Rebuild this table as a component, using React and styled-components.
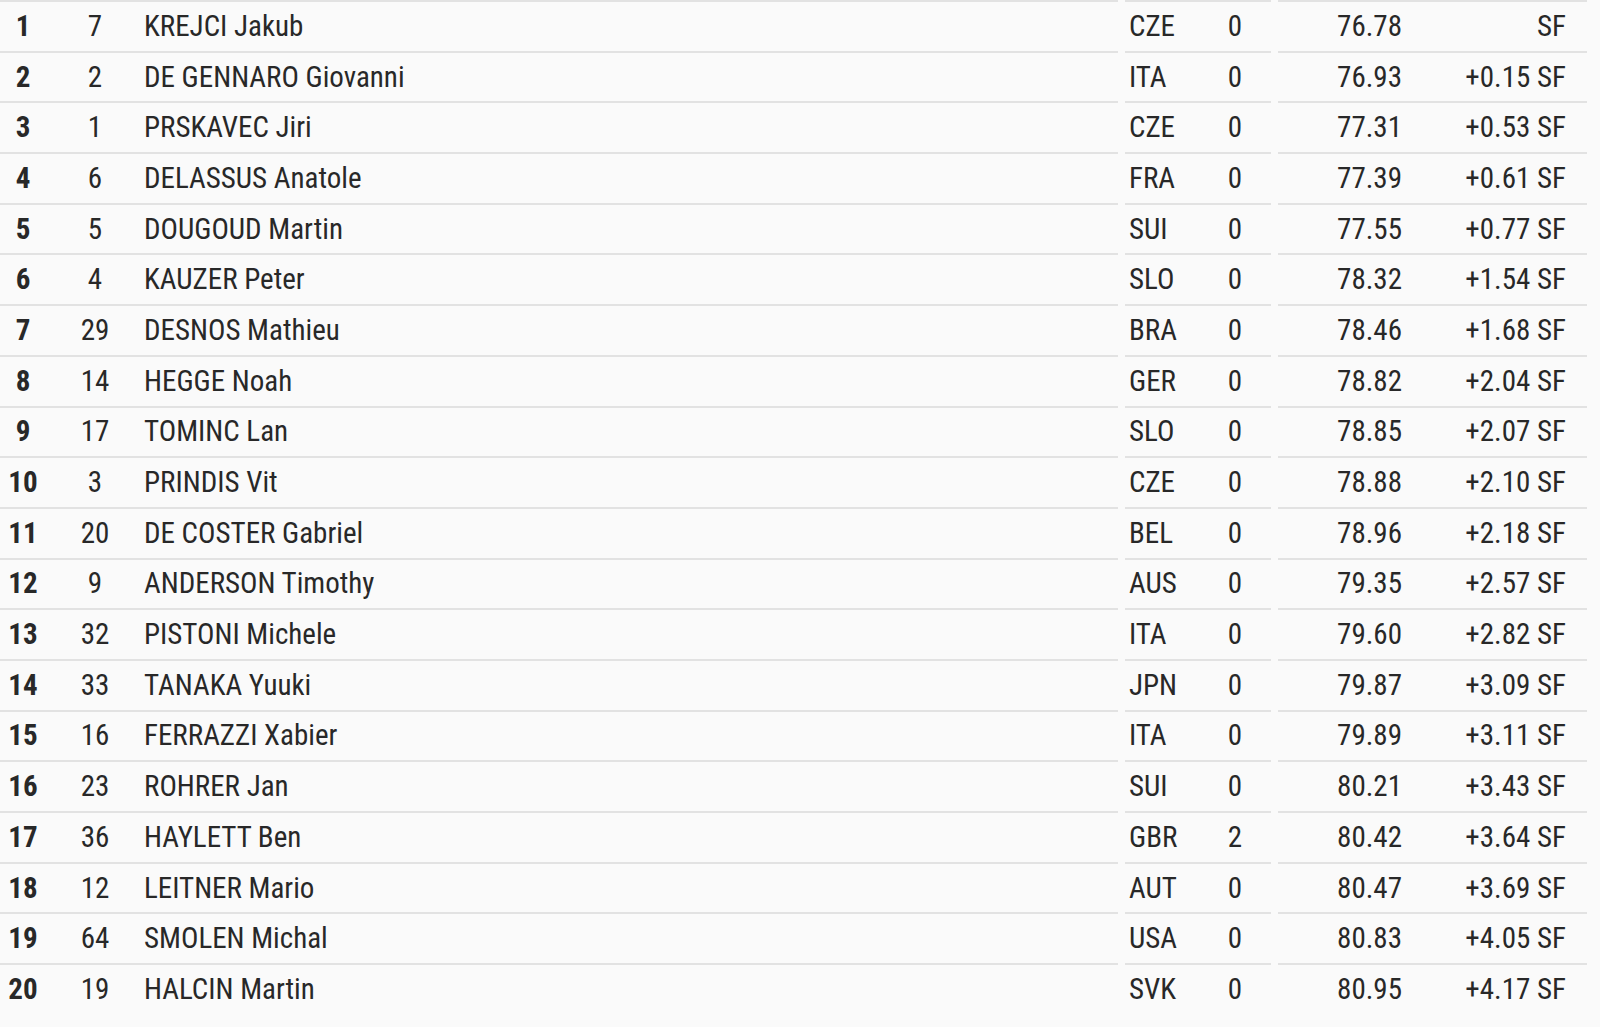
import styled, { createGlobalStyle } from 'styled-components';

const results = [
  [1, 7, 'KREJCI Jakub', 'CZE', 0, '76.78', 'SF'],
  [2, 2, 'DE GENNARO Giovanni', 'ITA', 0, '76.93', '+0.15 SF'],
  [3, 1, 'PRSKAVEC Jiri', 'CZE', 0, '77.31', '+0.53 SF'],
  [4, 6, 'DELASSUS Anatole', 'FRA', 0, '77.39', '+0.61 SF'],
  [5, 5, 'DOUGOUD Martin', 'SUI', 0, '77.55', '+0.77 SF'],
  [6, 4, 'KAUZER Peter', 'SLO', 0, '78.32', '+1.54 SF'],
  [7, 29, 'DESNOS Mathieu', 'BRA', 0, '78.46', '+1.68 SF'],
  [8, 14, 'HEGGE Noah', 'GER', 0, '78.82', '+2.04 SF'],
  [9, 17, 'TOMINC Lan', 'SLO', 0, '78.85', '+2.07 SF'],
  [10, 3, 'PRINDIS Vit', 'CZE', 0, '78.88', '+2.10 SF'],
  [11, 20, 'DE COSTER Gabriel', 'BEL', 0, '78.96', '+2.18 SF'],
  [12, 9, 'ANDERSON Timothy', 'AUS', 0, '79.35', '+2.57 SF'],
  [13, 32, 'PISTONI Michele', 'ITA', 0, '79.60', '+2.82 SF'],
  [14, 33, 'TANAKA Yuuki', 'JPN', 0, '79.87', '+3.09 SF'],
  [15, 16, 'FERRAZZI Xabier', 'ITA', 0, '79.89', '+3.11 SF'],
  [16, 23, 'ROHRER Jan', 'SUI', 0, '80.21', '+3.43 SF'],
  [17, 36, 'HAYLETT Ben', 'GBR', 2, '80.42', '+3.64 SF'],
  [18, 12, 'LEITNER Mario', 'AUT', 0, '80.47', '+3.69 SF'],
  [19, 64, 'SMOLEN Michal', 'USA', 0, '80.83', '+4.05 SF'],
  [20, 19, 'HALCIN Martin', 'SVK', 0, '80.95', '+4.17 SF'],
];

const GlobalStyle = createGlobalStyle`
  body {
    margin: 0;
    background: #fafafa;
    font-family: 'Roboto Condensed', Roboto, 'Liberation Sans', sans-serif;
    color: #282828;
  }
`;

const Table = styled.div`
  width: 1587px;
  display: flex;
  flex-direction: column;
`;

const Row = styled.div`
  display: flex;
  gap: 7px;
  height: 50.7px;
`;

const Group = styled.div`
  display: grid;
  align-items: center;
  border-top: 2px solid #e2e2e2;
  font-size: 29px;
  line-height: 1;
`;

const AthleteGroup = styled(Group)`
  width: 1118px;
  grid-template-columns: 46px 98px 1fr;
`;

const NationGroup = styled(Group)`
  width: 146px;
  padding-left: 4px;
  box-sizing: border-box;
  grid-template-columns: 70px 72px;
`;

const TimeGroup = styled(Group)`
  width: 309px;
  padding-right: 21px;
  box-sizing: border-box;
  grid-template-columns: 124px 164px;
`;

const Rank = styled.span`
  font-weight: 700;
  text-align: center;
`;

const Cell = styled.span`
  text-align: ${props => props.$align || 'left'};
  padding-left: ${props => props.$pad || 0}px;
  white-space: nowrap;
`;

export default function App() {
  return (
    <>
      <GlobalStyle />
      <Table>
        {results.map(([rank, bib, name, nation, pen, time, diff]) => (
          <Row key={rank}>
            <AthleteGroup>
              <Rank>{rank}</Rank>
              <Cell $align="center">{bib}</Cell>
              <Cell>{name}</Cell>
            </AthleteGroup>
            <NationGroup>
              <Cell>{nation}</Cell>
              <Cell $align="center">{pen}</Cell>
            </NationGroup>
            <TimeGroup>
              <Cell $align="right">{time}</Cell>
              <Cell $align="right">{diff}</Cell>
            </TimeGroup>
          </Row>
        ))}
      </Table>
    </>
  );
}
